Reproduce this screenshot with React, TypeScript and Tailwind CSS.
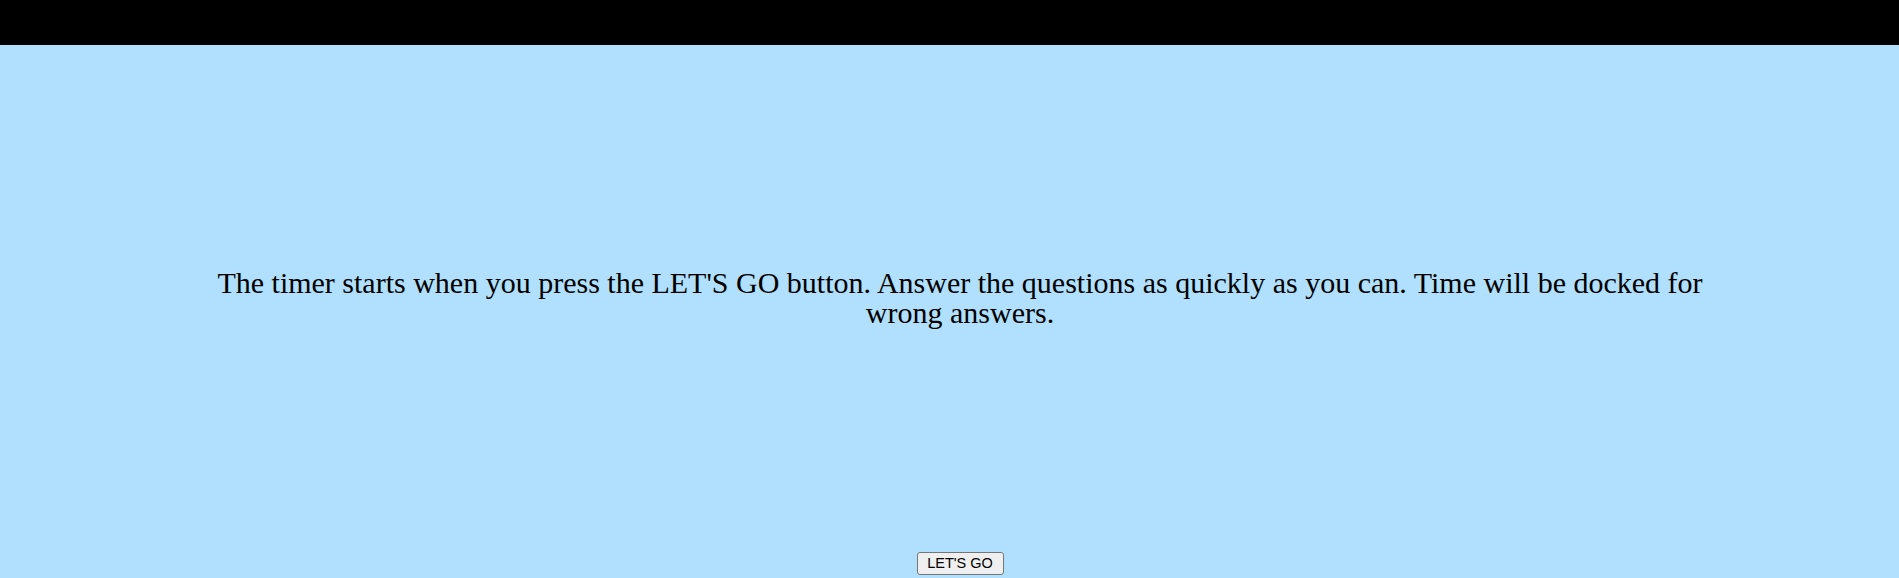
export default function App() {
  return (
    <div className="w-full h-[578px] bg-[#b0e0fe] overflow-hidden" style={{ fontFamily: '"Liberation Serif", serif' }}>
      <div className="h-[45px] bg-black" />
      <div className="pl-[21px] flex flex-col items-center">
        <p className="mt-[223px] w-[1540px] text-center text-[30px] leading-[30px] text-black">
          The timer starts when you press the LET'S GO button. Answer the questions as quickly as you can. Time will be docked for wrong answers.
        </p>
        <button
          className="mt-[224px] w-[87px] h-[23px] border border-[#767676] rounded-[3px] bg-[#efefef] text-[14.5px] text-black flex items-center justify-center"
          style={{ fontFamily: '"Liberation Sans", Arial, sans-serif' }}
        >
          LET'S GO
        </button>
      </div>
    </div>
  );
}
